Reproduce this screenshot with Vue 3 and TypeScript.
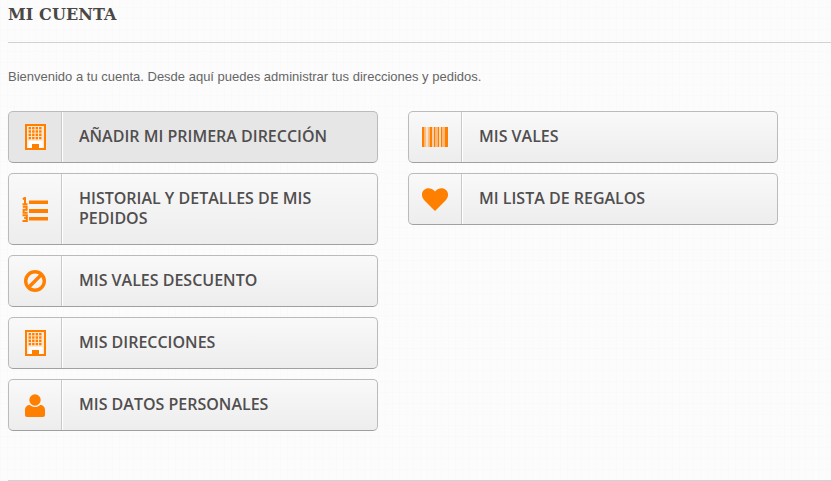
<script setup lang="ts">
type Link = { label: string, icon: 'building' | 'list' | 'ban' | 'user' | 'barcode' | 'heart', active?: boolean }

const leftLinks: Link[] = [
  { label: 'Añadir mi primera dirección', icon: 'building', active: true },
  { label: 'Historial y detalles de mis pedidos', icon: 'list' },
  { label: 'Mis vales descuento', icon: 'ban' },
  { label: 'Mis direcciones', icon: 'building' },
  { label: 'Mis datos personales', icon: 'user' }
]
const rightLinks: Link[] = [
  { label: 'Mis vales', icon: 'barcode' },
  { label: 'Mi lista de regalos', icon: 'heart' }
]
const columns = [leftLinks, rightLinks]

// barcode bars as [x, width, opacity]
const bars = [
  [0, 2.5, 1], [3, 1, 0.45], [4.5, 1, 0.3], [6, 1, 0.45], [7.5, 2.5, 1], [10.5, 1, 0.6],
  [12, 1.5, 1], [14, 1, 0.5], [15.5, 1.5, 1], [17.5, 1, 0.45], [19, 1.5, 1], [21, 1, 0.5], [22.5, 3.5, 1]
]
const windows: number[][] = []
for (let row = 0; row < 4; row++) {
  for (let col = 0; col < 4; col++) windows.push([3.6 + col * 3.5, 3 + row * 3.3])
}
</script>

<template>
  <div class="page">
    <h1 class="title">Mi cuenta</h1>
    <p class="intro">Bienvenido a tu cuenta. Desde aquí puedes administrar tus direcciones y pedidos.</p>
    <div class="columns">
      <ul v-for="(links, i) in columns" :key="i" class="link-list">
        <li v-for="link in links" :key="link.label">
          <a href="#" class="link" :class="{ active: link.active }" @click.prevent>
            <span class="link-icon">
              <svg v-if="link.icon === 'building'" width="21" height="26" viewBox="0 0 21 26">
                <path fill="#ff7f00" d="M0 0h21v26H0z" />
                <path fill="#ffe9d4" d="M2 2h17v22H2z" />
                <rect v-for="w in windows" :key="w.join()" :x="w[0]" :y="w[1]" width="2.4" height="2.4" fill="#ff7f00" />
                <path fill="#fff" d="M3.500 17h14v7h-14z" />
                <path fill="#ff7f00" d="M7 20h7v6H7z" />
              </svg>
              <svg v-else-if="link.icon === 'list'" width="26" height="25" viewBox="0 0 26 25">
                <path fill="#ff7f00" d="M7 3.500h19v3.500H7zM7 12h19v4H7zM7 20h19v3.500H7z" />
                <path fill="none" stroke="#ff7f00" stroke-width="2" d="M.8 2 3 1v6.200M.5 7.200h5M.8 9.800h3.800v3H1.600v3h4M.5 18.200h4.300v2.800H2.200m2.600 0v3H.5" />
              </svg>
              <svg v-else-if="link.icon === 'ban'" width="22" height="22" viewBox="0 0 22 22">
                <circle cx="11" cy="11" r="9.300" fill="none" stroke="#ff7f00" stroke-width="3.400" />
                <path d="M5 17 17 5" stroke="#ff7f00" stroke-width="3.400" />
              </svg>
              <svg v-else-if="link.icon === 'user'" width="20" height="23" viewBox="0 0 20 23">
                <circle cx="10" cy="6" r="5.700" fill="#ff7f00" />
                <path fill="#ff7f00" d="M0 21v-5c0-3 2-5 5-5 1.500 1.500 3 2 5 2s3.500-.5 5-2c3 0 5 2 5 5v5c0 1.300-.7 2-2 2H2c-1.300 0-2-.7-2-2z" />
              </svg>
              <svg v-else-if="link.icon === 'barcode'" width="26" height="20" viewBox="0 0 26 20">
                <rect v-for="b in bars" :key="b[0]" :x="b[0]" y="0" :width="b[1]" height="20" fill="#ff7f00" :opacity="b[2]" />
              </svg>
              <svg v-else width="26" height="23" viewBox="0 0 26 23">
                <path fill="#ff7f00" d="M13 23 2.500 12.500C-.8 9.200-.8 4.500 2 2c2.800-2.700 7.500-2.500 11 1.500C16.500-.5 21.200-.7 24 2c2.800 2.500 2.800 7.200-.5 10.500z" />
              </svg>
            </span>
            <span class="link-label">{{ link.label }}</span>
          </a>
        </li>
      </ul>
    </div>
    <div class="bottom-rule"></div>
  </div>
</template>

<style scoped>
.page {
  height: 481px;
  box-sizing: border-box;
  padding-left: 8px;
  display: flex;
  flex-direction: column;
  overflow: hidden;
}
.title {
  margin: 0;
  height: 43px;
  box-sizing: border-box;
  padding-top: 5px;
  border-bottom: 1px solid #d2d2d2;
  font-family: "DejaVu Serif", serif;
  font-size: 16px;
  line-height: 20px;
  font-weight: 700;
  letter-spacing: 0.1px;
  text-transform: uppercase;
  color: #4a4745;
}
.intro {
  margin: 26px 0 0;
  font-family: "Liberation Sans", Arial, sans-serif;
  font-size: 13px;
  line-height: 16px;
  color: #666;
}
.columns {
  margin-top: 26px;
  display: flex;
  gap: 30px;
  flex: 1;
  align-items: flex-start;
}
.link-list {
  width: 370px;
  margin: 0;
  padding: 0;
  list-style: none;
  display: flex;
  flex-direction: column;
  gap: 10px;
}
.link {
  display: flex;
  min-height: 52px;
  box-sizing: border-box;
  border: 1px solid #bbb;
  border-bottom-color: #a0a0a0;
  border-radius: 5px;
  background: linear-gradient(to bottom, #f9f9f9, #ededed);
  text-decoration: none;
}
.link.active {
  background: #e6e6e6;
}
.link-icon {
  flex: none;
  width: 53px;
  box-sizing: border-box;
  border-right: 1px solid #c9c9c9;
  box-shadow: 1px 0 0 #fff;
  display: flex;
  align-items: center;
  justify-content: center;
}
.link-label {
  flex: 1;
  align-self: center;
  padding: 14px 17px 16px;
  font-family: "Open Sans", sans-serif;
  font-size: 16px;
  line-height: 20px;
  font-weight: 600;
  text-transform: uppercase;
  color: #504e4e;
}
.bottom-rule {
  height: 1px;
  background: #d2d2d2;
}
</style>

<style>
html, body {
  margin: 0;
  background-color: #fcfcfc;
  background-image:
    repeating-linear-gradient(90deg, rgba(0, 0, 0, 0.008) 0 1px, transparent 1px 7px),
    repeating-linear-gradient(0deg, rgba(0, 0, 0, 0.008) 0 1px, transparent 1px 11px);
}
</style>
